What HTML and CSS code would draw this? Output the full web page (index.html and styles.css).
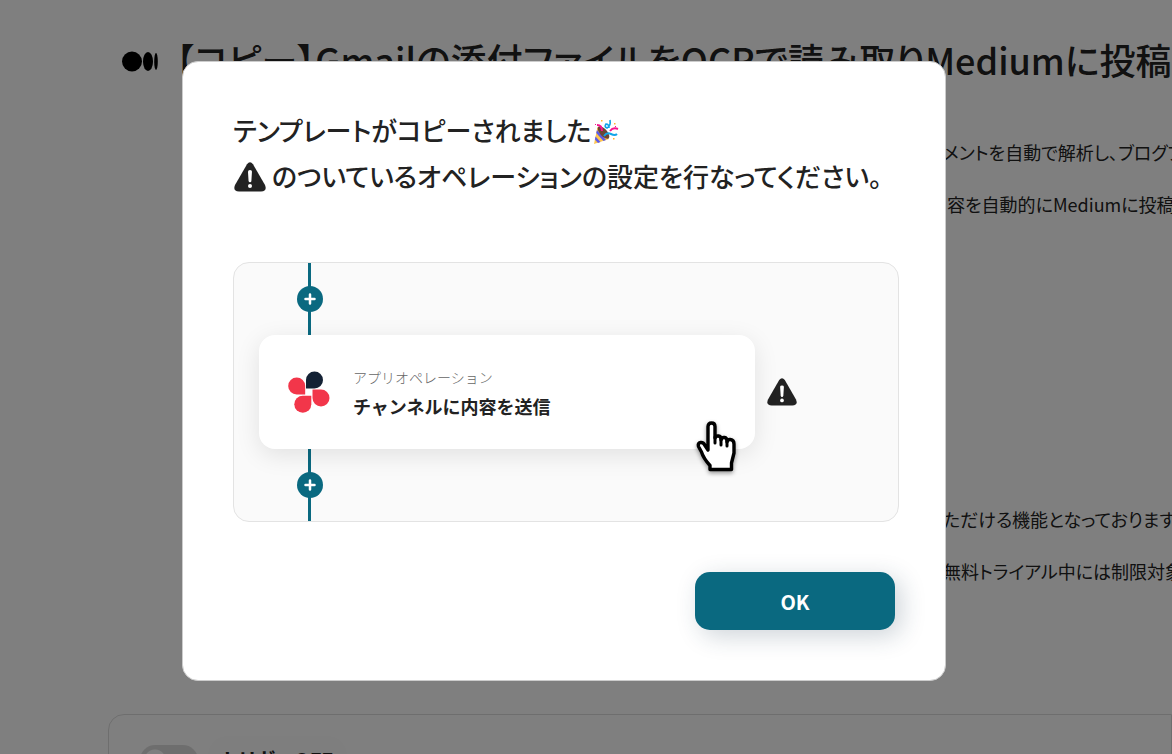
FILE: index.html
```html
<!DOCTYPE html>
<html lang="ja">
<head>
<meta charset="utf-8">
<title>テンプレート</title>
<link rel="stylesheet" href="styles.css">
</head>
<body>
<svg class="defs" aria-hidden="true">
  <symbol id="warning" viewBox="0 0 32 30">
    <path d="M13 2.2Q16-1.6 19 2.2L31 23Q33.5 29.5 27 29.5H5Q-1.500 29.500 1 23Z" fill="#222"/>
    <path d="M14 9.500Q14 8 16 8T18 9.500L17.400 19Q17.300 20.300 16 20.300T14.600 19Z" fill="#fff"/>
    <circle cx="16" cy="24" r="2" fill="#fff"/>
  </symbol>
</svg>
<main class="page">
  <header class="heading">
    <svg class="medium" viewBox="0 0 36 21" aria-label="Medium" role="img">
      <ellipse cx="10" cy="10.500" rx="10" ry="10"/><ellipse cx="26" cy="10.500" rx="5" ry="9.500"/><ellipse cx="34" cy="10.500" rx="1.800" ry="8.500"/>
    </svg>
    <h1 class="title">【コピー】Gmailの添付ファイルをOCRで読み取りMediumに投稿する</h1>
  </header>
  <section class="summary">
    <p class="line">メントを自動で解析し、ブログプ</p>
    <p class="line indent">容を自動的にMediumに投稿</p>
  </section>
  <section class="notes">
    <p class="line">ただける機能となっております</p>
    <p class="line">無料トライアル中には制限対象</p>
  </section>
  <section class="flow">
    <label class="switch"><input type="checkbox" class="switch-input" aria-label="トリガー"></label>
    <span class="status">トリガーOFF</span>
  </section>
</main>
<div class="overlay">
  <div class="modal" role="dialog" aria-modal="true" aria-labelledby="message">
    <h2 class="message" id="message">
      <span class="row">テンプレートがコピーされました<svg class="emoji" viewBox="0 0 26 25" role="img" aria-label="🎉">
        <path d="M4.500 8L16 20 1 25Z" fill="#ffc54d"/>
        <path d="M4 11L13 21 10.500 22 3.200 14ZM2.500 17.500L7.500 23 5 24 1.900 20.500Z" fill="#5b5bea"/>
        <ellipse cx="10.500" cy="13.500" rx="3.600" ry="7.800" transform="rotate(-42 10.500 13.500)" fill="#6d4635"/>
        <path d="M4 6Q9 6 9 12" fill="none" stroke="#f8128f" stroke-width="2"/>
        <path d="M17 1Q18 7 14 9Q11 8 13 5Q16 5 16 9" fill="none" stroke="#12a5e8" stroke-width="1.700"/>
        <path d="M17 12Q20 8 25 10" fill="none" stroke="#f8128f" stroke-width="2"/>
        <path d="M11 17Q14 13 18 15T24 15" fill="none" stroke="#12a5e8" stroke-width="2"/>
        <path d="M8 1h1.500v1.500H8ZM21 4h1.500v1.500H21ZM20 19h1.500v1.500H20Z" fill="#ffb62e"/>
        <path d="M2 5h1v1H2ZM22 7h1v1H22Z" fill="#f8128f"/>
      </svg></span>
      <span class="row"><svg class="warn-large"><use href="#warning"/></svg>のついているオペレーションの設定を行なってください。</span>
    </h2>
    <div class="preview">
      <div class="connector"><span class="plus"><svg class="plus-icon" viewBox="0 0 12 12"><path d="M6 1.500V10.500M1.500 6H10.500"/></svg></span></div>
      <div class="operation">
        <div class="card">
          <svg class="app" viewBox="0 0 42 42">
            <path d="M18 17.500V9A8.500 8.500 0 1 1 26.500 17.500Z" fill="#142235"/>
            <path d="M17.200 23.500H8.700A8.500 8.500 0 1 1 17.200 15Z" fill="#f2364a"/>
            <path d="M24.500 18.500H33A8.500 8.500 0 1 1 24.500 27Z" fill="#f2364a"/>
            <path d="M23.300 24.800V33.300A8.500 8.500 0 1 1 14.800 24.800Z" fill="#f2364a"/>
          </svg>
          <div class="texts">
            <span class="kind">アプリオペレーション</span>
            <span class="name">チャンネルに内容を送信</span>
          </div>
          <svg class="hand" viewBox="0 0 42 52">
            <path d="M12 29V5.500Q12 2 15.500 2T19 5.500V17Q20 14.500 22.500 15T25 18V19Q26 16 28.500 16.500T31 20V21Q32 18 34.500 18.500Q38 19 38 23V32L35.500 42V48.500H14V44.500C9 39 7 36 5.500 31L2.500 25.500Q1.500 22 4.500 21.500T9 24.500L12 29Z" fill="#fff" stroke="#000" stroke-width="3.400" stroke-linejoin="round"/>
            <path d="M19 16V22M25 18V24M31 20V25" fill="none" stroke="#000" stroke-width="3" stroke-linecap="round"/>
          </svg>
        </div>
        <svg class="warn-small" viewBox="0 0 32 30"><use href="#warning" width="32" height="30"/></svg>
      </div>
      <div class="connector"><span class="plus"><svg class="plus-icon" viewBox="0 0 12 12"><path d="M6 1.500V10.500M1.500 6H10.500"/></svg></span></div>
    </div>
    <button type="button" class="ok">OK</button>
  </div>
</div>
</body>
</html>
```
FILE: styles.css
```css
* { box-sizing: border-box; }
body {
  margin: 0;
  height: 100vh;
  overflow: hidden;
  background: #fff;
  color: #222;
  font-family: "Noto Sans CJK JP", sans-serif;
  font-feature-settings: "palt";
}
svg { display: block; flex: none; }
.defs { display: none; }
h1, h2, p { margin: 0; }
.page { padding: 32px 0 0 108px; white-space: nowrap; }
.heading { display: flex; align-items: center; gap: 18px; height: 58px; padding-left: 14px; }
.medium { width: 36px; height: 21px; }
.title { padding-bottom: 4px; font-size: 36px; line-height: 54px; font-weight: 500; }
.line { font-size: 18px; line-height: 52px; }
.summary, .notes { padding-left: 835px; }
.indent { padding-left: 4px; }
.summary { margin-top: 36px; }
.notes { margin-top: 263px; }
.flow {
  display: flex;
  align-items: flex-start;
  gap: 10px;
  height: 200px;
  margin-top: 117px;
  padding: 21px 31px;
  border: 1px solid #ddd;
  border-radius: 16px 0 0 0;
}
.switch { display: flex; margin-top: 9px; }
.switch-input {
  appearance: none;
  width: 58px;
  height: 30px;
  margin: 0;
  border-radius: 15px;
  background: radial-gradient(circle at 15px 15px, #fff 10px, #ddd 11px);
}
.status {
  padding: 0 14px;
  border-radius: 20px;
  background: #fcfcfc;
  font-size: 20px;
  line-height: 48px;
  font-weight: 700;
}
.overlay {
  position: fixed;
  inset: 0;
  display: flex;
  align-items: center;
  justify-content: center;
  padding: 0 44px 12px 0;
  background: rgba(0, 0, 0, .5);
}
.modal {
  display: flex;
  flex-direction: column;
  width: 100%;
  max-width: 764px;
  padding: 45px 46px 50px 50px;
  border: 1px solid #ccc;
  border-radius: 16px;
  background: #fff;
}
.message { font-size: 26px; line-height: 46px; font-weight: 500; }
.row { display: flex; align-items: center; white-space: nowrap; }
.emoji { width: 26px; height: 25px; margin: 3px 0 0 2px; }
.warn-large { width: 32px; height: 30px; margin: 2px 6px 0 1px; }
.preview {
  margin-top: 63px;
  border: 1px solid #e3e3e3;
  border-radius: 16px;
  background: #fafafa;
  font-feature-settings: normal;
}
.connector {
  display: flex;
  align-items: center;
  justify-content: center;
  width: 3px;
  height: 72px;
  margin-left: 74px;
  background: #0a6980;
}
.plus {
  display: flex;
  flex: none;
  align-items: center;
  justify-content: center;
  width: 26px;
  height: 26px;
  border-radius: 50%;
  background: #0a6980;
}
.plus-icon { width: 12px; height: 12px; fill: none; stroke: #fff; stroke-width: 2.5; stroke-linecap: round; }
.operation { display: flex; align-items: center; gap: 12px; padding-left: 25px; }
.card {
  position: relative;
  display: flex;
  align-items: center;
  gap: 23px;
  width: 496px;
  height: 114px;
  padding-left: 29px;
  border-radius: 16px;
  background: #fff;
  box-shadow: 0 6px 24px rgba(0, 0, 0, .1);
}
.app { width: 42px; height: 42px; }
.texts { display: flex; flex-direction: column; }
.kind { color: #666; font-size: 14px; line-height: 28px; font-weight: 300; }
.name { font-size: 18px; line-height: 30px; font-weight: 700; }
.hand {
  position: absolute;
  right: 17px;
  bottom: -24px;
  width: 42px;
  height: 52px;
  filter: drop-shadow(0 2px 2px rgba(0, 0, 0, .4));
}
.warn-small { width: 30px; height: 28px; }
.ok {
  align-self: flex-end;
  width: 200px;
  height: 58px;
  margin: 50px 4px 0 0;
  border: 0;
  border-radius: 15px;
  background: #0a6980;
  box-shadow: 6px 6px 24px rgba(30, 60, 80, .22);
  color: #fff;
  font: 700 20px "Noto Sans CJK JP", sans-serif;
}
```
